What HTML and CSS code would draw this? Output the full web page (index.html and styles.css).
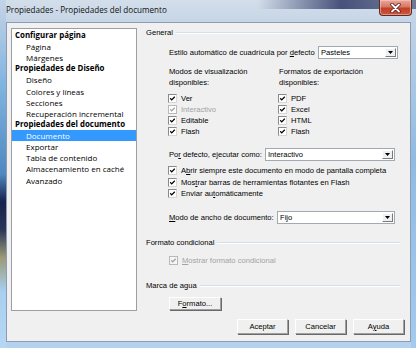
FILE: index.html
```html
<!DOCTYPE html>
<html>
  <head>
    <title>Propiedades del documento</title>
    <link rel="stylesheet" href="styles.css">
  </head>
  <body>
    <svg width="0" height="0" class="defs">
      <symbol id="chk" viewBox="0 0 9 9">
        <path d="M1.6 4.2 L3.5 6.2 L7.4 2.2" fill="none" stroke-width="1.6" />
      </symbol>
      <symbol id="arrow" viewBox="0 0 5 3">
        <path d="M0 0 H5 L2.5 3 Z" />
      </symbol>
    </svg>

    <div class="window">
      <div class="titlebar">
        <span class="title">Propiedades - Propiedades del documento</span>
        <span class="close">
          <svg width="13" height="10" viewBox="0 0 13 10">
            <path d="M3 1.5 L10 8.5 M10 1.5 L3 8.5" stroke="#5a1a12" stroke-width="3.4" stroke-linecap="round" />
            <path d="M3 1.5 L10 8.5 M10 1.5 L3 8.5" stroke="#fff" stroke-width="1.8" stroke-linecap="round" />
          </svg>
        </span>
      </div>

      <div class="client">
        <div class="main">
          <ul class="tree">
            <li class="head">Configurar página</li>
            <li>Página</li>
            <li>Márgenes</li>
            <li class="head">Propiedades de Diseño</li>
            <li>Diseño</li>
            <li>Colores y líneas</li>
            <li>Secciones</li>
            <li>Recuperación incremental</li>
            <li class="head">Propiedades del documento</li>
            <li class="selected">Documento</li>
            <li>Exportar</li>
            <li>Tabla de contenido</li>
            <li>Almacenamiento en caché</li>
            <li>Avanzado</li>
          </ul>

          <div class="panel">
            <div class="group-title general"><span>General</span></div>

            <div class="row row-style">
              <span class="label">Estilo automático de cuadrícula por <u>d</u>efecto</span>
              <div class="select w80"><span>Pasteles</span><span class="drop"><svg><use href="#arrow" /></svg></span></div>
            </div>

            <div class="cols">
              <div class="col">
                <div class="col-head">Modos de visualización<br>disponibles:</div>
                <div class="check"><svg class="cb on"><use href="#chk" /></svg>Ver</div>
                <div class="check disabled"><svg class="cb on"><use href="#chk" /></svg>Interactivo</div>
                <div class="check"><svg class="cb on"><use href="#chk" /></svg>Editable</div>
                <div class="check"><svg class="cb on"><use href="#chk" /></svg>Flash</div>
              </div>
              <div class="col">
                <div class="col-head">Formatos de exportación<br>disponibles:</div>
                <div class="check"><svg class="cb on"><use href="#chk" /></svg>PDF</div>
                <div class="check"><svg class="cb on"><use href="#chk" /></svg>Excel</div>
                <div class="check"><svg class="cb on"><use href="#chk" /></svg>HTML</div>
                <div class="check"><svg class="cb on"><use href="#chk" /></svg>Flash</div>
              </div>
            </div>

            <div class="row row-run">
              <span class="label">Po<u>r</u> defecto, ejecutar como:</span>
              <div class="select w130"><span>Interactivo</span><span class="drop"><svg><use href="#arrow" /></svg></span></div>
            </div>

            <div class="checks">
              <div class="check tall"><svg class="cb on"><use href="#chk" /></svg>A<u>b</u>rir siempre este documento en modo de pantalla completa</div>
              <div class="check tall"><svg class="cb on"><use href="#chk" /></svg>Mos<u>t</u>rar barras de herramientas flotantes en Flash</div>
              <div class="check tall"><svg class="cb on"><use href="#chk" /></svg>Enviar au<u>t</u>omáticamente</div>
            </div>

            <div class="row row-width">
              <span class="label"><u>M</u>odo de ancho de documento:</span>
              <div class="select w118"><span>Fijo</span><span class="drop"><svg><use href="#arrow" /></svg></span></div>
            </div>

            <div class="group-title cond"><span>Formato condicional</span></div>
            <div class="check disabled off-row"><svg class="cb off"><use href="#chk" /></svg><u>M</u>ostrar formato condicional</div>

            <div class="group-title water"><span>Marca de agua</span></div>
            <button class="btn format">F<u>o</u>rmato...</button>
          </div>
        </div>

        <div class="footer">
          <button class="btn">Aceptar</button>
          <button class="btn">Cancelar</button>
          <button class="btn">A<u>y</u>uda</button>
        </div>
      </div>
    </div>
  </body>
</html>
```

FILE: styles.css
```css
* {
  box-sizing: border-box;
}
body {
  margin: 0;
  width: 416px;
  height: 348px;
  overflow: hidden;
  font-family: "Liberation Sans", Arial, sans-serif;
  font-size: 7.6px;
  color: #000;
}
.defs {
  position: absolute;
}
u {
  text-decoration-thickness: 1px;
  text-underline-offset: 1px;
}

/* window frame */
.window {
  width: 416px;
  height: 348px;
  padding: 0 5px 6px 6px;
  display: flex;
  flex-direction: column;
  background:
    linear-gradient(to right, rgba(20, 30, 80, 0) 62%, rgba(25, 35, 85, 0.75) 82%, rgba(20, 30, 80, 0.5) 100%) top / 100% 9px no-repeat,
    linear-gradient(#c4d4e6 0, #7fb3e0 25%, #4f88c0 50%, #17224d 58%, #2b3557 66%, #9a9a78 74%, #a9d0f2 84%, #b6d7f3 100%) left / 6px 100% no-repeat,
    linear-gradient(#c9d7e7 0, #8fbbe3 45%, #a4cbee 100%) right / 5px 100% no-repeat,
    linear-gradient(#d3deea, #c6d5e6 22px, #b4d2ef 100%);
}
.titlebar {
  height: 22px;
  display: flex;
  justify-content: space-between;
  align-items: flex-start;
}
.title {
  font-family: "Open Sans", "Noto Sans", sans-serif;
  font-size: 8.1px;
  line-height: 20px;
  color: #111;
}
.close {
  width: 33px;
  height: 16px;
  margin-right: -1px;
  display: flex;
  align-items: center;
  justify-content: center;
  border: 1px solid #5b2b24;
  border-top: none;
  border-radius: 0 0 4px 4px;
  background: linear-gradient(#e9a99c 0, #d57866 45%, #c1402a 55%, #d0553c 100%);
  box-shadow: inset 0 0 0 1px rgba(255, 210, 200, 0.5);
}

.client {
  flex: 1;
  display: flex;
  flex-direction: column;
  background: #f0f0f0;
  border: 1px solid #8d9cb0;
}
.main {
  display: flex;
  padding: 5px 0 0 4px;
}

/* left tree */
.tree {
  width: 126px;
  height: 283px;
  margin: 0;
  padding: 0.8px 0 0;
  list-style: none;
  background: #fff;
  border: 1px solid #9a9fa6;
  font-family: "Open Sans", "Noto Sans", sans-serif;
  font-size: 8px;
}
.tree li {
  height: 11.15px;
  line-height: 11.15px;
  padding-left: 14px;
  white-space: nowrap;
}
.tree .head {
  padding-left: 3px;
  font-size: 7.9px;
  font-weight: bold;
}
.tree .selected {
  background: #3399ff;
  color: #fff;
}

/* right panel */
.panel {
  width: 254px;
  margin-left: 9px;
  display: flex;
  flex-direction: column;
}
.group-title {
  display: flex;
  align-items: center;
  height: 11px;
}
.group-title::after {
  content: "";
  flex: 1;
  margin-left: 3px;
  border-top: 1px solid #d5dfe5;
  border-bottom: 1px solid #fff;
}
.general {
  margin-top: -1px;
}
.cond {
  margin-top: 13px;
}
.water {
  margin-top: 14.5px;
}

.row {
  display: flex;
  align-items: center;
  height: 13px;
  padding-left: 23px;
}
.row .label {
  flex: 1;
}
.row-style {
  margin-top: 8px;
  padding-right: 2px;
}
.row-run {
  margin-top: 11px;
  padding-right: 5px;
}
.row-width {
  margin-top: 11.5px;
  padding-right: 5px;
}

.select {
  height: 13px;
  display: flex;
  align-items: center;
  justify-content: space-between;
  background: #fff;
  border: 1px solid #a3a9b2;
  padding: 0 1px 0 2px;
}
.w80 {
  width: 80px;
}
.w130 {
  width: 130px;
}
.w118 {
  width: 118px;
}
.drop {
  width: 11px;
  height: 9px;
  display: flex;
  align-items: center;
  justify-content: center;
  background: #f0f0f0;
  border: 1px solid;
  border-color: #fff #7a7a7a #7a7a7a #fff;
}
.drop svg {
  width: 5px;
  height: 3px;
}

.cols {
  display: grid;
  grid-template-columns: 110px 1fr;
  margin-top: 7px;
  padding-left: 22px;
}
.col-head {
  line-height: 11px;
  padding-left: 1px;
  margin-bottom: 5px;
}
.check {
  display: flex;
  align-items: center;
  height: 11px;
  white-space: nowrap;
}
.check.tall {
  height: 11.5px;
}
.checks {
  margin-top: 4px;
  padding-left: 22px;
}
.cb {
  width: 9px;
  height: 9px;
  margin-right: 4px;
  flex: none;
  background: #fff;
  border: 1px solid #8b8b8b;
  border-right-color: #d6d6d6;
  border-bottom-color: #d6d6d6;
  stroke: #000;
}
.cb.off {
  stroke: none;
}
.check.disabled {
  color: #a3a3a3;
}
.check.disabled .cb {
  border-color: #b9b9b9;
  stroke: #a0a0a0;
}
.off-row {
  margin-top: 6.5px;
  padding-left: 23px;
}
.off-row .cb {
  background: #f6f6f6;
}

/* buttons */
.btn {
  height: 15px;
  width: 51px;
  padding: 0;
  font: inherit;
  color: #000;
  background: #f0f0f0;
  border: 1px solid;
  border-color: #fff #a0a0a0 #a0a0a0 #fff;
  box-shadow: 1px 1px 0 #696969;
}
.format {
  width: 52px;
  height: 13px;
  margin: 6px 0 0 23px;
}
.footer {
  display: flex;
  justify-content: flex-end;
  gap: 7px;
  margin-top: 8px;
  padding-right: 6px;
}
```
